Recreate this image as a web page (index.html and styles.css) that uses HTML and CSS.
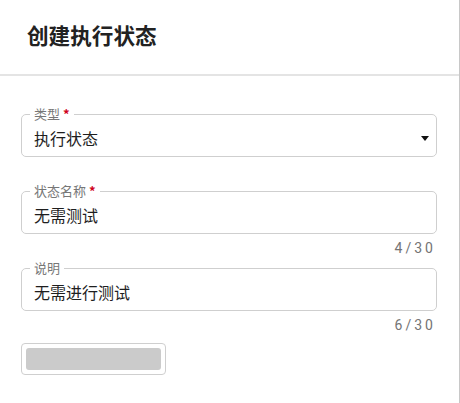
FILE: index.html
```html
<!DOCTYPE html>
<html lang="zh-CN">
<head>
<meta charset="utf-8">
<title>创建执行状态</title>
<link rel="stylesheet" href="styles.css">
</head>
<body>
<div class="panel">
  <header class="header">
    <h1 class="title">创建执行状态</h1>
  </header>
  <main class="form">
    <div class="field">
      <fieldset class="box">
        <legend class="label">类型 <span class="req">*</span></legend>
        <div class="control select">
          <span class="value">执行状态</span>
          <svg class="caret" width="8" height="5" viewBox="0 0 8 5"><path d="M0 0H8L4 5Z" fill="#111"/></svg>
        </div>
      </fieldset>
      <div class="helper"></div>
    </div>
    <div class="field">
      <fieldset class="box">
        <legend class="label">状态名称 <span class="req">*</span></legend>
        <div class="control"><span class="value">无需测试</span></div>
      </fieldset>
      <div class="helper">4/30</div>
    </div>
    <div class="field">
      <fieldset class="box">
        <legend class="label">说明</legend>
        <div class="control"><span class="value">无需进行测试</span></div>
      </fieldset>
      <div class="helper">6/30</div>
    </div>
    <button class="btn" type="button"><span class="btn-fill"></span></button>
  </main>
</div>
</body>
</html>
```
FILE: styles.css
```css
* { box-sizing: border-box; }
html, body { margin: 0; padding: 0; background: #fff; }
body {
  font-family: Roboto, "Noto Sans CJK SC", sans-serif;
  color: #222;
}
.panel {
  width: 460px;
  min-height: 100vh;
  border-right: 1px solid #c8c8c8;
}
.header {
  height: 76px;
  padding: 24px 0 0 27px;
  border-bottom: 2px solid #e4e4e4;
}
.title {
  margin: 0;
  font-size: 21.6px;
  line-height: 22px;
  font-weight: 700;
  color: #222;
  font-family: "Noto Sans CJK SC", sans-serif;
}
.form {
  padding: 30px 22px 0 21px;
  display: flex;
  flex-direction: column;
}
.field { display: flex; flex-direction: column; }
.box {
  margin: 0;
  padding: 0 7px 8px 12px;
  border: 1px solid #cfcfcf;
  border-radius: 5px;
  min-width: 0;
}
.label {
  margin-left: -4px;
  padding: 0 4px;
  height: 16px;
  font-size: 13px;
  line-height: 16px;
  color: #777;
  font-family: "Noto Sans CJK SC", sans-serif;
}
.req { color: #d0021b; font-weight: 700; }
.control {
  margin-top: 6px;
  height: 20px;
  display: flex;
  align-items: center;
  justify-content: space-between;
}
.value {
  font-size: 16px;
  line-height: 20px;
  color: #1e1e1e;
  font-family: "Noto Sans CJK SC", sans-serif;
}
.caret { display: block; margin-top: 1px; }
.helper {
  height: 26px;
  padding-top: 2px;
  padding-right: 1px;
  line-height: 24px;
  text-align: right;
  font-size: 14px;
  letter-spacing: 3px;
  color: #747474;
}
.btn {
  margin-top: 6px;
  align-self: flex-start;
  width: 145px;
  height: 32px;
  padding: 4px;
  border: 1px solid #cfcfcf;
  border-radius: 4px;
  background: #fff;
  display: flex;
}
.btn-fill {
  flex: 1;
  height: 22px;
  background: #cbcbcb;
  border-radius: 3px;
}
```
